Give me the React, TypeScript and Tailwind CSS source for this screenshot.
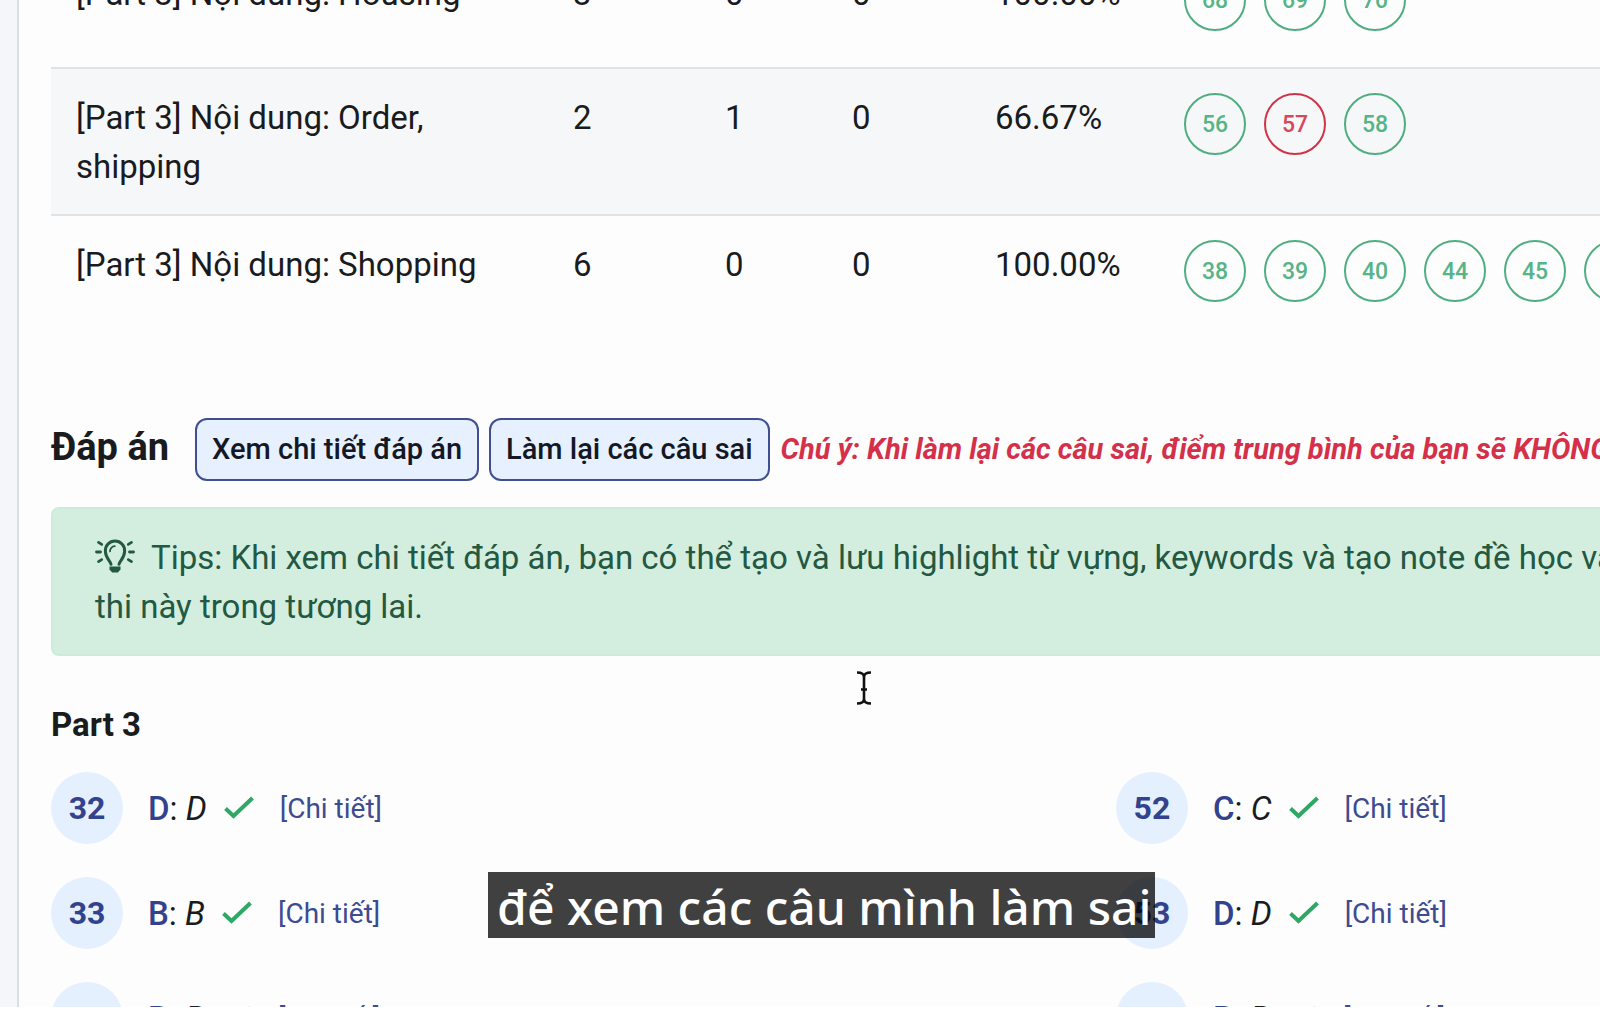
import React from "react";

type Row = {
  label: string;
  correct: number;
  wrong: number;
  skipped: number;
  accuracy: string;
  questions: { n: number; ok: boolean }[];
};

const q = (n: number, ok = true) => ({ n, ok });

const rows: Row[] = [
  { label: "[Part 3] Nội dung: Housing", correct: 3, wrong: 0, skipped: 0, accuracy: "100.00%", questions: [q(68), q(69), q(70)] },
  { label: "[Part 3] Nội dung: Order, shipping", correct: 2, wrong: 1, skipped: 0, accuracy: "66.67%", questions: [q(56), q(57, false), q(58)] },
  { label: "[Part 3] Nội dung: Shopping", correct: 6, wrong: 0, skipped: 0, accuracy: "100.00%", questions: [q(38), q(39), q(40), q(44), q(45), q(46)] },
];

const answerColumns = [
  [
    { n: 32, key: "D" },
    { n: 33, key: "B" },
    { n: 34, key: "B" },
  ],
  [
    { n: 52, key: "C" },
    { n: 53, key: "D" },
    { n: 54, key: "B" },
  ],
];

function BulbIcon() {
  return (
    <svg viewBox="0 0 40 34" className="mr-4 inline-block h-[34px] w-10 align-[-4px]" fill="none" stroke="currentColor" strokeWidth="3" strokeLinecap="round" aria-hidden="true">
      <path d="M16 25.200c-.7-3.400-5.600-6.400-5.600-13A9.600 9.600 0 0 1 20 2a9.600 9.600 0 0 1 9.600 10.200c0 6.600-4.900 9.600-5.600 13" />
      <path d="M15 12.400a5 5 0 0 1 4.800-5.200" strokeWidth="1.800" />
      <path d="M14.500 27.400h11v3l-2.600 3.200h-5.800l-2.600-3.200z" fill="currentColor" stroke="none" />
      <path d="M1.500 13h4M34.500 13h4M3.500 3.400l3.200 2M36.500 3.400l-3.200 2M3.500 22.600l3.200-2M36.500 22.600l-3.200-2" strokeWidth="2.800" />
    </svg>
  );
}

function CheckIcon() {
  return (
    <svg viewBox="0 0 30 24" className="h-6 w-[30px]" fill="none" stroke="#2fa866" strokeWidth="4" aria-hidden="true">
      <path d="M1.500 12.500l8 7.500L28.500 2" />
    </svg>
  );
}

function TextCursor() {
  return (
    <svg viewBox="0 0 16 34" className="absolute left-[856px] top-[671px] h-[34px] w-4" fill="none" stroke="#111" strokeWidth="2.6" aria-hidden="true">
      <path d="M1 1.500c4 0 7 1.200 7 4.500v22c0 3.300-3 4.500-7 4.500M15 1.500c-4 0-7 1.200-7 4.500v22c0 3.300 3 4.500 7 4.500M5 18.500h6" />
    </svg>
  );
}

const cell = "px-[25px] pt-6 pb-[23px]";

function ResultTable() {
  return (
    <table className="-mt-[57px] w-full table-fixed border-collapse text-left">
      <colgroup>
        <col className="w-[497px]" />
        <col className="w-[152px]" />
        <col className="w-[127px]" />
        <col className="w-[143px]" />
        <col className="w-[189px]" />
        <col />
      </colgroup>
      <tbody>
        {rows.map((r) => (
          <tr key={r.label} className="h-[124px] border-t-2 border-[#dfe3e6] align-top even:bg-[#f6f7f9]">
            <td className={cell}>{r.label}</td>
            <td className={cell}>{r.correct}</td>
            <td className={cell}>{r.wrong}</td>
            <td className={cell}>{r.skipped}</td>
            <td className={cell}>{r.accuracy}</td>
            <td className={cell}>
              <div className="flex gap-[18px]">
                {r.questions.map(({ n, ok }) => (
                  <a
                    key={n}
                    href={"#q" + n}
                    className={
                      "flex size-[62px] shrink-0 items-center justify-center rounded-full border-2 text-[23px] font-medium " +
                      (ok ? "border-[#4fae80] text-[#57b486]" : "border-[#cf3347] text-[#d9485a]")
                    }
                  >
                    {n}
                  </a>
                ))}
              </div>
            </td>
          </tr>
        ))}
      </tbody>
    </table>
  );
}

const actionClass =
  "h-[63px] shrink-0 rounded-xl border-2 border-[#3f4f8f] bg-[#e6f0ff] px-[15px] text-[29px] font-medium text-[#141824]";

export default function App() {
  return (
    <div className="relative h-screen overflow-hidden bg-white pb-0.5 font-['Roboto',sans-serif] text-[33px] leading-[49px] text-[#1a1b1d]">
      <div className="flex h-full overflow-hidden bg-[#f4f6f9]">
        <main className="ml-[17px] min-w-0 flex-1 overflow-hidden border-l-2 border-[#dcdfe2] bg-[#fdfdfd] pl-8">
          <ResultTable />

          <section className="mt-[79px] flex items-center whitespace-nowrap">
            <h2 className="mr-[26px] pb-1 text-[38px] font-bold">Đáp án</h2>
            <div className="flex gap-[10px]">
              <button type="button" className={actionClass}>Xem chi tiết đáp án</button>
              <button type="button" className={actionClass}>Làm lại các câu sai</button>
            </div>
            <em className="ml-[11px] text-[29px] font-bold text-[#d5304a]">
              Chú ý: Khi làm lại các câu sai, điểm trung bình của bạn sẽ KHÔNG
            </em>
          </section>

          <p className="mt-[26px] rounded-l-lg border-2 border-r-0 border-[#cdebda] bg-[#d3eede] pt-6 pb-[23px] pl-[42px] whitespace-nowrap text-[#235842]">
            <BulbIcon />
            Tips: Khi xem chi tiết đáp án, bạn có thể tạo và lưu highlight từ vựng, keywords và tạo note đề học và
            <br />
            thi này trong tương lai.
          </p>

          <h3 className="mt-11 font-bold">Part 3</h3>
          <div className="mt-[23px] grid grid-cols-[11fr_5fr]">
            {answerColumns.map((col, i) => (
              <ul key={i} className="flex flex-col gap-[33px]">
                {col.map(({ n, key }) => (
                  <li key={n} className="flex items-center">
                    <span className="flex size-[72px] items-center justify-center rounded-full bg-[#e4f0fe] text-[32px] font-bold text-[#33428c]">{n}</span>
                    <span className="ml-[25px]">
                      <span className="font-medium text-[#33428c]">{key}</span>: <i>{key}</i>
                    </span>
                    <span className="ml-[17px]">
                      <CheckIcon />
                    </span>
                    <a href={"#detail-" + n} className="ml-[26px] text-[28px] text-[#3d4b91]">[Chi tiết]</a>
                  </li>
                ))}
              </ul>
            ))}
          </div>
        </main>
      </div>

      <TextCursor />
      <div className="absolute top-[872px] left-[488px] bg-black/75 pt-1 pr-1 pl-[9px] font-['Noto_Sans',sans-serif] text-[48px] leading-[62px] font-medium whitespace-nowrap text-white">
        để xem các câu mình làm sai
      </div>
    </div>
  );
}
